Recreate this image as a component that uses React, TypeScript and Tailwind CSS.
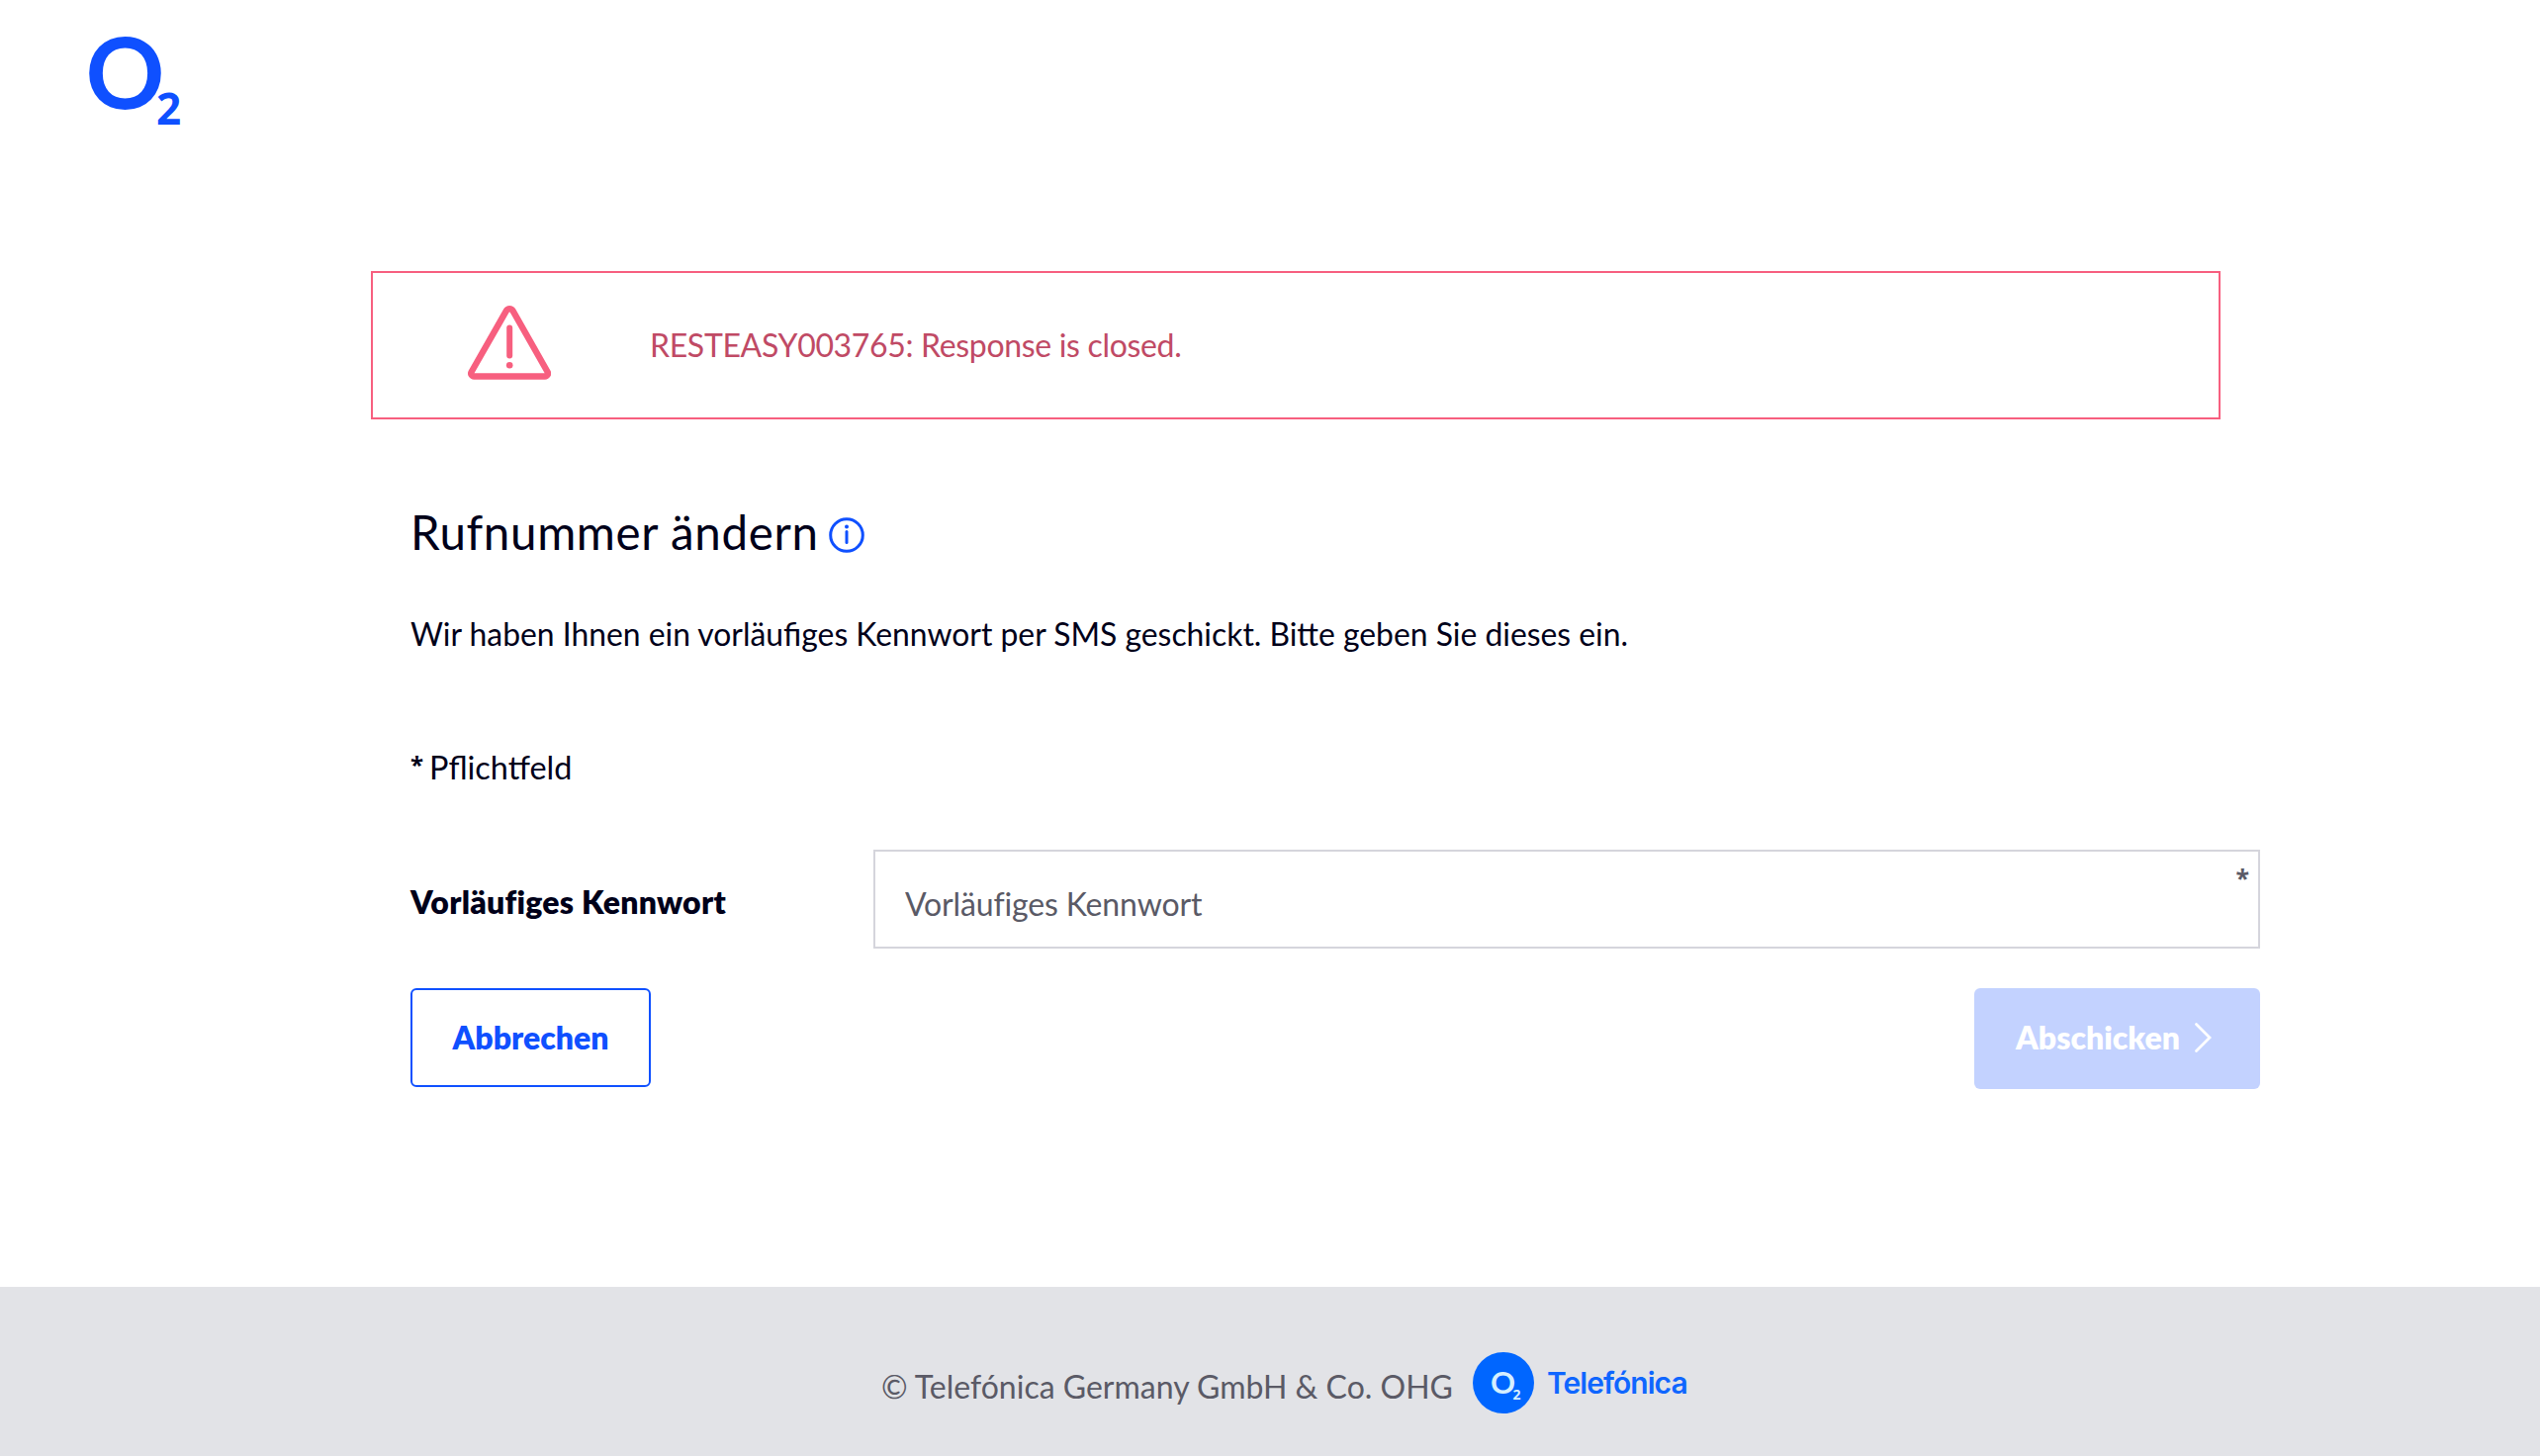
import React from 'react';

const O2Logo: React.FC = () => (
  <svg width="240" height="180" viewBox="0 0 240 180" className="block" fill="#0f50ff">
    <text x="86.5" y="110" fontFamily="Lato, sans-serif" fontWeight="700" fontSize="99">
      O<tspan x="158" y="125.5" fontFamily="Noto Sans, sans-serif" fontSize="44">2</tspan>
    </text>
  </svg>
);

const WarningIcon: React.FC = () => (
  <svg width="84" height="76" viewBox="0 0 84 76" className="-mt-[5px]" fill="none" stroke="#f75f7f" strokeLinecap="round" strokeLinejoin="round">
    <path d="M38.9 5.2a3.8 3.8 0 0 1 6.6 0L80.6 67a3 3 0 0 1-2.6 4.5H6.2A3 3 0 0 1 3.6 67Z" strokeWidth="6.4" />
    <path d="M42.2 22.5v28" strokeWidth="6" />
    <circle cx="42.2" cy="60.2" r="3.3" fill="#f75f7f" stroke="none" />
  </svg>
);

const InfoIcon: React.FC = () => (
  <svg width="36" height="36" viewBox="0 0 36 36" className="mt-[6px]" fill="none" stroke="#0f50ff">
    <circle cx="18" cy="18" r="16.3" strokeWidth="3" />
    <path d="M18 14.5v11" strokeWidth="3" strokeLinecap="round" />
    <circle cx="18" cy="9.5" r="2" fill="#0f50ff" stroke="none" />
  </svg>
);

const TelefonicaBadge: React.FC = () => (
  <svg width="62" height="62" viewBox="0 0 62 62" className="-ml-px">
    <circle cx="31" cy="31" r="31" fill="#0066ff" />
    <text x="18" y="42" fontSize="31" fill="#d5efff" fontFamily="Lato, sans-serif" fontWeight="700">
      O<tspan x="40.5" y="47.5" fontSize="14" fontFamily="Noto Sans, sans-serif">2</tspan>
    </text>
  </svg>
);

const App: React.FC = () => {
  return (
    <div className="flex h-[1472px] w-[2568px] flex-col bg-white font-['Lato',sans-serif] text-[32px] leading-[48px] text-[#000019]">
      <header className="h-[274px]">
        <O2Logo />
      </header>

      <main className="flex-1 pl-[375px]">
        <div className="flex h-[150px] w-[1870px] items-center border-2 border-[#f75f7f] pl-24">
          <WarningIcon />
          <p className="ml-[100px] tracking-[-0.33px] text-[#c04a65]">RESTEASY003765: Response is closed.</p>
        </div>

        <div className="w-[1910px] pl-10">
          <h1 className="mt-[82px] flex items-center text-[47.5px] leading-[64px]">
            <span className="w-[423px] tracking-[0.65px] whitespace-nowrap">Rufnummer ändern</span>
            <InfoIcon />
          </h1>
          <p className="mt-[47px] text-[31.85px] whitespace-nowrap">
            Wir haben Ihnen ein vorläufiges Kennwort per SMS geschickt. Bitte geben Sie dieses ein.
          </p>
          <p className="mt-[87px] flex gap-[6px]">
            <span className="font-['Noto_Sans',sans-serif] text-[24px] leading-[42px] font-bold">*</span>
            <span className="text-[32.4px]">Pflichtfeld</span>
          </p>

          <div className="mt-[59px] flex items-center">
            <label htmlFor="code" className="w-[468px] pt-[5px] font-extrabold tracking-[0.25px] whitespace-nowrap">Vorläufiges Kennwort</label>
            <div className="relative flex-1">
              <input
                id="code"
                placeholder="Vorläufiges Kennwort"
                className="block h-[100px] w-full border-2 border-[#d5d5dc] pt-2 pl-[30px] tracking-[-0.15px] placeholder:text-[#5a5a66] placeholder:opacity-100"
              />
              <span className="absolute top-2 right-[11px] font-['Noto_Sans',sans-serif] text-[25px] leading-10 font-bold text-[#5a5a66]">*</span>
            </div>
          </div>

          <div className="mt-10 flex items-start justify-between font-extrabold">
            <button className="h-[100px] w-[243px] rounded-md border-2 border-[#0f50ff] text-[#0f50ff]">Abbrechen</button>
            <button className="flex h-[102px] w-[289px] items-center rounded-md bg-[#c3d2ff] pb-0.5 pl-[42px] text-white">
              <span className="w-[180px] text-left">Abschicken</span>
              <svg width="18" height="32" viewBox="0 0 18 32" fill="none" stroke="#fff" strokeWidth="2.8" strokeLinecap="round">
                <path d="M2.5 2.5 16 16 2.5 29.5" />
              </svg>
            </button>
          </div>
        </div>
      </main>

      <footer className="flex h-[171px] items-start bg-[#e2e3e7] pt-[66px] pl-[891px] text-[#5a5a66]">
        <span className="w-[599px] pt-[11px] whitespace-nowrap">© Telefónica Germany GmbH &amp; Co. OHG</span>
        <TelefonicaBadge />
        <span className="ml-[13px] pt-[7px] font-['Inter',sans-serif] text-[30px] font-semibold tracking-[-0.95px] text-[#0f66ff]">Telefónica</span>
      </footer>
    </div>
  );
};

export default App;
